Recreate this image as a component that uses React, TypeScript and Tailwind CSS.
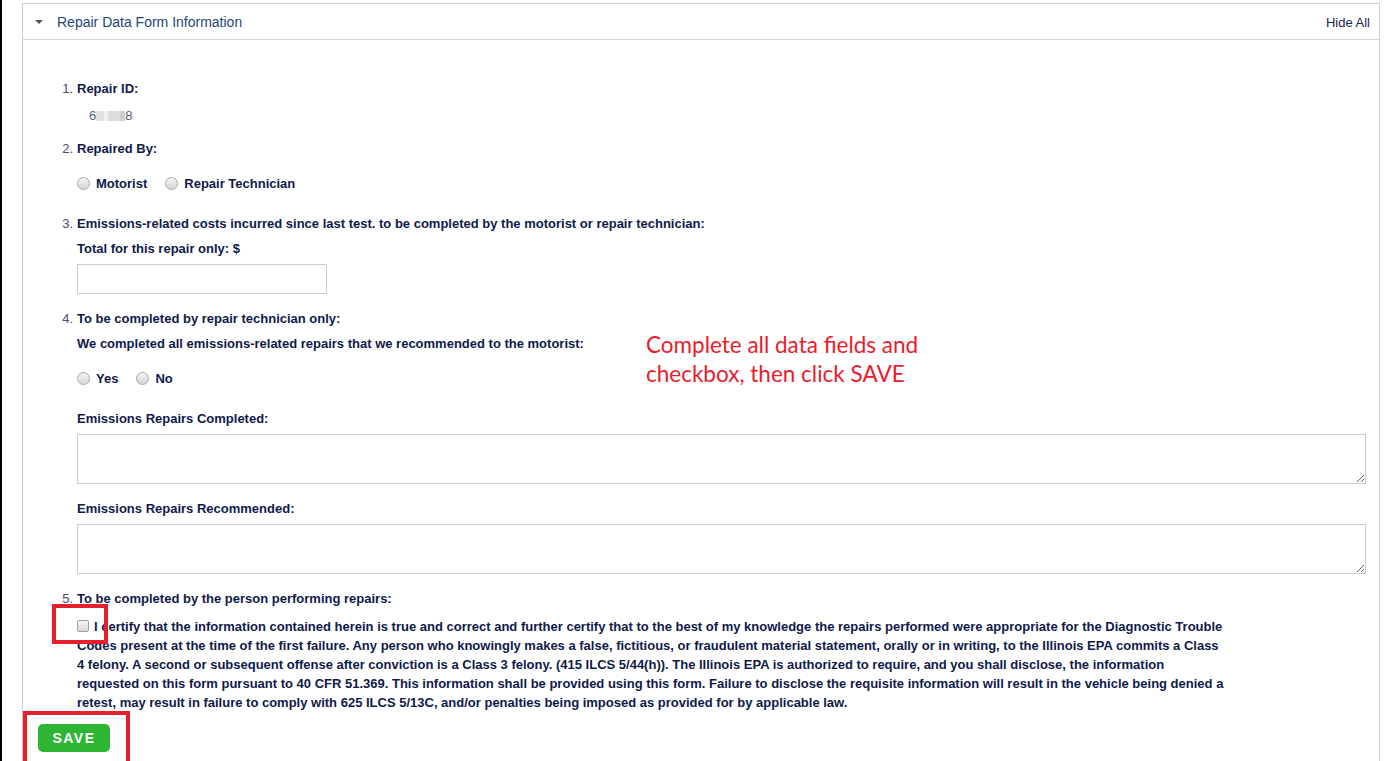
import type { ReactNode } from 'react'

const label = 'font-bold text-[#0f1a4a]'

function Radio({ text }: { text: string }) {
  return (
    <span className="flex items-center">
      <span className="w-[13px] h-[13px] rounded-full border border-[#a8a8a8] bg-gradient-to-b from-[#f4f4f4] to-[#d6d6d6]" />
      <span className={`ml-[6px] ${label}`}>{text}</span>
    </span>
  )
}

function Numbered({ n, children }: { n: number; children: ReactNode }) {
  return (
    <div className="flex -ml-[19px]">
      <span className="w-[15px] mr-[4px] text-right text-[#4a4a5a]">{n}.</span>
      <span className={label}>{children}</span>
    </div>
  )
}

export default function App() {
  return (
    <div
      className="flex w-full h-[761px] overflow-hidden bg-white text-[13px] leading-[19px]"
      style={{ fontFamily: "'Liberation Sans', Arial, sans-serif" }}
    >
      <div className="w-[2px] bg-black shrink-0" />
      <div className="flex-1 pl-[20px] pt-[3px] pr-[14px]">
        <div className="relative border border-[#cccccc] h-[800px]">
          {/* Header */}
          <div className="flex items-center h-[36px] border-b border-[#d4d4d4] pl-[12px] pr-[9px] pt-[1px]">
            <span className="w-0 h-0 border-l-[4px] border-r-[4px] border-t-[4px] border-l-transparent border-r-transparent border-t-[#555]" />
            <span className="ml-[14px] text-[14px] text-[#24467a]">Repair Data Form Information</span>
            <span className="ml-auto text-[#1a2450]">Hide All</span>
          </div>

          {/* Body */}
          <div className="pl-[54px] pr-[13px] pt-[39px]">
            <Numbered n={1}>Repair ID:</Numbered>
            <div className="mt-[8px] ml-[12px] flex items-center text-[#5a5f70]">
              6
              <span className="inline-block w-[8px] h-[10px] bg-[#e2e2e2]" />
              <span className="inline-block w-[4px] h-[10px] bg-[#f0f0f0]" />
              <span className="inline-block w-[12px] h-[10px] bg-[#dcdcdc]" />
              <span className="inline-block w-[5px] h-[10px] bg-[#cfcfcf]" />
              8
            </div>

            <div className="mt-[14px]">
              <Numbered n={2}>Repaired By:</Numbered>
            </div>
            <div className="mt-[16px] flex gap-[18px]">
              <Radio text="Motorist" />
              <Radio text="Repair Technician" />
            </div>

            <div className="mt-[21px]">
              <Numbered n={3}>
                Emissions-related costs incurred since last test. to be completed by the motorist or repair technician:
              </Numbered>
            </div>
            <div className={`mt-[6px] ${label}`}>Total for this repair only: $</div>
            <input className="mt-[6px] block w-[250px] h-[30px] border border-[#cccccc]" />

            <div className="mt-[15px]">
              <Numbered n={4}>To be completed by repair technician only:</Numbered>
            </div>
            <div className={`mt-[6px] ${label}`}>We completed all emissions-related repairs that we recommended to the motorist:</div>
            <div className="mt-[16px] flex gap-[18px]">
              <Radio text="Yes" />
              <Radio text="No" />
            </div>

            <div className={`mt-[21px] ${label}`}>Emissions Repairs Completed:</div>
            <textarea className="mt-[6px] block w-full h-[50px] border border-[#cccccc]" />

            <div className={`mt-[15px] ${label}`}>Emissions Repairs Recommended:</div>
            <textarea className="mt-[6px] block w-full h-[50px] border border-[#cccccc]" />

            <div className="mt-[15px]">
              <Numbered n={5}>To be completed by the person performing repairs:</Numbered>
            </div>
            <p className={`relative mt-[9px] whitespace-nowrap ${label}`}>
              <span className="inline-block align-[-1px] w-[12px] h-[12px] rounded-[2px] border border-[#a0a0a0] bg-gradient-to-b from-[#f6f6f6] to-[#dadada] mr-[5px]" />
              I certify that the information contained herein is true and correct and further certify that to the best of my knowledge the repairs performed were appropriate for the Diagnostic Trouble
              <br />
              Codes present at the time of the first failure. Any person who knowingly makes a false, fictitious, or fraudulent material statement, orally or in writing, to the Illinois EPA commits a Class
              <br />
              4 felony. A second or subsequent offense after conviction is a Class 3 felony. (415 ILCS 5/44(h)). The Illinois EPA is authorized to require, and you shall disclose, the information
              <br />
              requested on this form pursuant to 40 CFR 51.369. This information shall be provided using this form. Failure to disclose the requisite information will result in the vehicle being denied a
              <br />
              retest, may result in failure to comply with 625 ILCS 5/13C, and/or penalties being imposed as provided for by applicable law.
              <span className="absolute left-[-25px] top-[-13px] w-[56px] h-[40px] border-[4px] border-[#e3202b]" />
            </p>
          </div>

          <div className="relative ml-[15px] mt-[12px] w-[72px]">
            <button className="w-[72px] h-[28px] rounded-[5px] bg-[#2db533] text-white font-bold tracking-[1.5px] text-[14px]">
              SAVE
            </button>
            <span className="absolute left-[-15px] top-[-13px] w-[107px] h-[60px] border-[4px] border-[#e3202b]" />
          </div>

          {/* Annotation */}
          <div
            className="absolute left-[623px] top-[326px] text-[22.5px] leading-[29px] text-[#ea1c2c]"
            style={{ fontFamily: "Lato, 'Open Sans', sans-serif" }}
          >
            Complete all data fields and
            <br />
            checkbox, then click SAVE
          </div>
        </div>
      </div>
    </div>
  )
}
